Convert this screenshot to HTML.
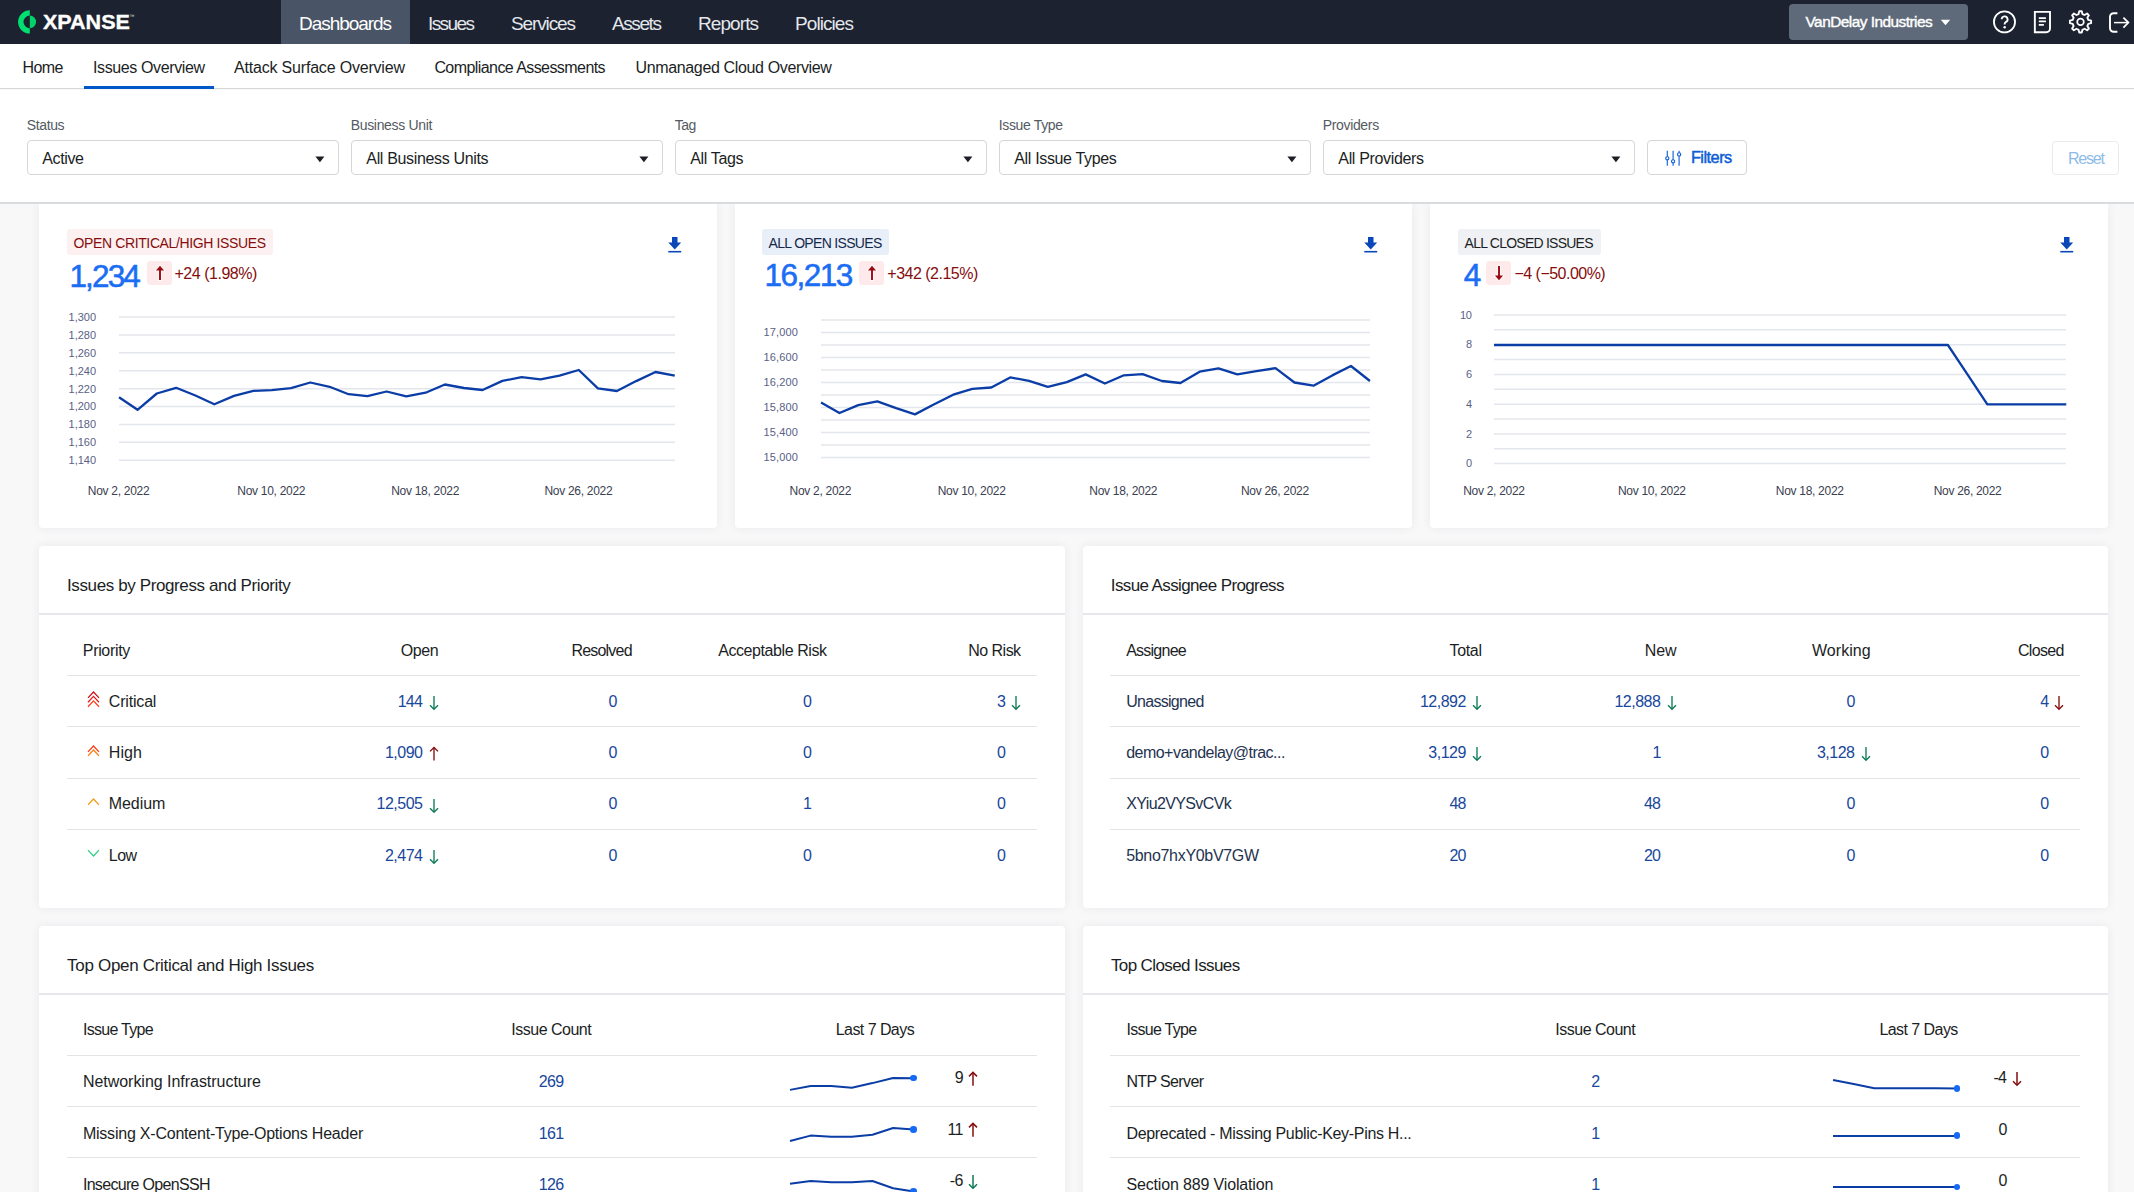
<!DOCTYPE html>
<html><head><meta charset="utf-8"><title>Xpanse - Issues Overview</title>
<style>
html,body{margin:0;padding:0;width:2134px;height:1192px;overflow:hidden;background:#f8f8f9;font-family:"Liberation Sans",sans-serif}
.t{position:absolute;white-space:nowrap}
.r{position:absolute;display:block}
</style></head><body>
<div class="r" style="left:39.00px;top:204.00px;width:677.70px;height:324.30px;background:#ffffff;border-radius:0 0 4px 4px;box-shadow:0 0 10px rgba(40,50,70,0.075);"></div>
<div class="r" style="left:67.00px;top:229.40px;width:206.00px;height:25.60px;background:#fdf0f0;border-radius:3px;"></div>
<div class="t" style="left:73.50px;top:236.25px;font-size:14.0px;line-height:14.0px;letter-spacing:-0.374px;color:#850d0d;">OPEN CRITICAL/HIGH ISSUES</div>
<div class="t" style="left:69.40px;top:260.93px;font-size:31.5px;line-height:31.5px;letter-spacing:-1.832px;color:#1b6ef3;-webkit-text-stroke:0.55px #1b6ef3;">1,234</div>
<div class="r" style="left:147.00px;top:260.80px;width:25.20px;height:24.20px;background:#feeaea;border-radius:3.5px;"></div>
<svg class="r" style="left:151.50px;top:263.00px" width="16" height="20" viewBox="151.50 263.00 16 20"><path d="M158.55 270.40 V280.00 H160.45 V270.40 H163.60 L159.50 265.80 L155.40 270.40 Z" fill="#9a0812" stroke="#ffffff" stroke-width="1.6" stroke-opacity="0.9" paint-order="stroke"/></svg>
<div class="t" style="left:174.40px;top:265.85px;font-size:16px;line-height:16px;letter-spacing:-0.461px;color:#850d0d;">+24 (1.98%)</div>
<svg class="r" style="left:667.90px;top:236.70px" width="14" height="16" viewBox="0 0 14 16"><path d="M4 0 H9.5 V5.6 H13.2 L6.75 12.4 L0.3 5.6 H4 Z" fill="#0a47b8"/><rect x="0.3" y="13.9" width="12.9" height="1.6" fill="#0a47b8"/></svg>
<svg class="r" style="left:118.70px;top:315.30px" width="556.30" height="147.28" viewBox="118.70 315.30 556.30 147.28"><path d="M118.70 317.30 H675.00 M118.70 335.21 H675.00 M118.70 353.12 H675.00 M118.70 371.03 H675.00 M118.70 388.94 H675.00 M118.70 406.85 H675.00 M118.70 424.76 H675.00 M118.70 442.67 H675.00 M118.70 460.58 H675.00" stroke="#e3e6ec" stroke-width="1.5"/></svg>
<div class="t" style="left:68.50px;top:311.89px;font-size:11px;line-height:11px;letter-spacing:0.018px;color:#5a6186;">1,300</div>
<div class="t" style="left:68.50px;top:329.80px;font-size:11px;line-height:11px;letter-spacing:0.018px;color:#5a6186;">1,280</div>
<div class="t" style="left:68.50px;top:347.71px;font-size:11px;line-height:11px;letter-spacing:0.018px;color:#5a6186;">1,260</div>
<div class="t" style="left:68.50px;top:365.62px;font-size:11px;line-height:11px;letter-spacing:0.018px;color:#5a6186;">1,240</div>
<div class="t" style="left:68.50px;top:383.53px;font-size:11px;line-height:11px;letter-spacing:0.018px;color:#5a6186;">1,220</div>
<div class="t" style="left:68.50px;top:401.44px;font-size:11px;line-height:11px;letter-spacing:0.018px;color:#5a6186;">1,200</div>
<div class="t" style="left:68.50px;top:419.35px;font-size:11px;line-height:11px;letter-spacing:0.018px;color:#5a6186;">1,180</div>
<div class="t" style="left:68.50px;top:437.26px;font-size:11px;line-height:11px;letter-spacing:0.018px;color:#5a6186;">1,160</div>
<div class="t" style="left:68.50px;top:455.17px;font-size:11px;line-height:11px;letter-spacing:0.018px;color:#5a6186;">1,140</div>
<svg class="r" style="left:114.70px;top:366.10px" width="563.80" height="47.80" viewBox="114.70 366.10 563.80 47.80"><polyline points="118.70,397.30 137.20,409.90 156.50,393.60 175.80,387.90 195.10,395.60 214.00,404.40 233.70,396.00 253.00,390.90 271.40,390.30 290.70,388.30 310.00,382.60 329.30,386.90 348.30,394.30 367.10,396.30 386.30,391.60 406.00,396.50 425.30,392.80 444.60,384.60 463.60,388.10 482.30,390.10 502.10,381.00 521.30,377.30 540.20,379.40 559.20,375.80 578.50,370.10 597.60,388.40 616.60,391.10 635.90,381.20 655.20,372.10 674.50,375.70" fill="none" stroke="#0b3da6" stroke-width="2.3" stroke-linejoin="round"/></svg>
<div class="t" style="left:87.80px;top:485.44px;font-size:12px;line-height:12px;letter-spacing:-0.291px;color:#3a4050;">Nov 2, 2022</div>
<div class="t" style="left:237.31px;top:485.44px;font-size:12px;line-height:12px;letter-spacing:-0.292px;color:#3a4050;">Nov 10, 2022</div>
<div class="t" style="left:391.21px;top:485.44px;font-size:12px;line-height:12px;letter-spacing:-0.292px;color:#3a4050;">Nov 18, 2022</div>
<div class="t" style="left:544.41px;top:485.44px;font-size:12px;line-height:12px;letter-spacing:-0.292px;color:#3a4050;">Nov 26, 2022</div>
<div class="r" style="left:734.70px;top:204.00px;width:677.60px;height:324.30px;background:#ffffff;border-radius:0 0 4px 4px;box-shadow:0 0 10px rgba(40,50,70,0.075);"></div>
<div class="r" style="left:761.80px;top:229.40px;width:127.20px;height:25.40px;background:#e9eff8;border-radius:3px;"></div>
<div class="t" style="left:768.60px;top:236.25px;font-size:14.0px;line-height:14.0px;letter-spacing:-0.678px;color:#14284b;">ALL OPEN ISSUES</div>
<div class="t" style="left:764.40px;top:260.33px;font-size:31.5px;line-height:31.5px;letter-spacing:-1.469px;color:#1b6ef3;-webkit-text-stroke:0.55px #1b6ef3;">16,213</div>
<div class="r" style="left:859.30px;top:260.80px;width:25.20px;height:24.20px;background:#feeaea;border-radius:3.5px;"></div>
<svg class="r" style="left:863.80px;top:263.00px" width="16" height="20" viewBox="863.80 263.00 16 20"><path d="M870.85 270.40 V280.00 H872.75 V270.40 H875.90 L871.80 265.80 L867.70 270.40 Z" fill="#9a0812" stroke="#ffffff" stroke-width="1.6" stroke-opacity="0.9" paint-order="stroke"/></svg>
<div class="t" style="left:887.30px;top:265.85px;font-size:16px;line-height:16px;letter-spacing:-0.501px;color:#850d0d;">+342 (2.15%)</div>
<svg class="r" style="left:1364.40px;top:236.60px" width="14" height="16" viewBox="0 0 14 16"><path d="M4 0 H9.5 V5.6 H13.2 L6.75 12.4 L0.3 5.6 H4 Z" fill="#0a47b8"/><rect x="0.3" y="13.9" width="12.9" height="1.6" fill="#0a47b8"/></svg>
<svg class="r" style="left:820.50px;top:317.70px" width="549.50" height="141.50" viewBox="820.50 317.70 549.50 141.50"><path d="M820.50 319.70 H1370.00 M820.50 332.20 H1370.00 M820.50 344.70 H1370.00 M820.50 357.20 H1370.00 M820.50 369.70 H1370.00 M820.50 382.20 H1370.00 M820.50 394.70 H1370.00 M820.50 407.20 H1370.00 M820.50 419.70 H1370.00 M820.50 432.20 H1370.00 M820.50 444.70 H1370.00 M820.50 457.20 H1370.00" stroke="#e3e6ec" stroke-width="1.5"/></svg>
<div class="t" style="left:763.40px;top:326.79px;font-size:11px;line-height:11px;letter-spacing:0.151px;color:#5a6186;">17,000</div>
<div class="t" style="left:763.40px;top:351.79px;font-size:11px;line-height:11px;letter-spacing:0.151px;color:#5a6186;">16,600</div>
<div class="t" style="left:763.40px;top:376.79px;font-size:11px;line-height:11px;letter-spacing:0.151px;color:#5a6186;">16,200</div>
<div class="t" style="left:763.40px;top:401.79px;font-size:11px;line-height:11px;letter-spacing:0.151px;color:#5a6186;">15,800</div>
<div class="t" style="left:763.40px;top:426.79px;font-size:11px;line-height:11px;letter-spacing:0.151px;color:#5a6186;">15,400</div>
<div class="t" style="left:763.40px;top:451.79px;font-size:11px;line-height:11px;letter-spacing:0.151px;color:#5a6186;">15,000</div>
<svg class="r" style="left:816.50px;top:362.00px" width="557.00" height="56.40" viewBox="816.50 362.00 557.00 56.40"><polyline points="820.50,402.60 838.90,413.00 857.70,405.10 876.80,401.40 895.60,408.20 914.40,414.40 933.70,404.30 952.70,394.70 971.80,388.90 990.80,387.50 1009.70,377.40 1028.50,380.80 1047.30,386.80 1066.30,382.10 1085.20,374.40 1104.40,383.50 1123.40,375.30 1142.10,374.10 1161.40,381.00 1179.90,383.00 1199.20,371.70 1218.00,368.40 1236.90,374.30 1255.90,371.10 1275.00,368.20 1294.00,382.50 1313.00,385.70 1331.80,375.40 1350.50,366.00 1369.50,381.00" fill="none" stroke="#0b3da6" stroke-width="2.3" stroke-linejoin="round"/></svg>
<div class="t" style="left:789.60px;top:485.44px;font-size:12px;line-height:12px;letter-spacing:-0.291px;color:#3a4050;">Nov 2, 2022</div>
<div class="t" style="left:937.71px;top:485.44px;font-size:12px;line-height:12px;letter-spacing:-0.292px;color:#3a4050;">Nov 10, 2022</div>
<div class="t" style="left:1089.31px;top:485.44px;font-size:12px;line-height:12px;letter-spacing:-0.292px;color:#3a4050;">Nov 18, 2022</div>
<div class="t" style="left:1240.91px;top:485.44px;font-size:12px;line-height:12px;letter-spacing:-0.292px;color:#3a4050;">Nov 26, 2022</div>
<div class="r" style="left:1430.30px;top:204.00px;width:677.50px;height:324.30px;background:#ffffff;border-radius:0 0 4px 4px;box-shadow:0 0 10px rgba(40,50,70,0.075);"></div>
<div class="r" style="left:1457.80px;top:229.30px;width:142.80px;height:25.70px;background:#eff1f4;border-radius:3px;"></div>
<div class="t" style="left:1464.60px;top:236.25px;font-size:14.0px;line-height:14.0px;letter-spacing:-0.762px;color:#1b1e24;">ALL CLOSED ISSUES</div>
<div class="t" style="left:1463.80px;top:260.23px;font-size:31.5px;line-height:31.5px;letter-spacing:0.000px;color:#1b6ef3;-webkit-text-stroke:0.55px #1b6ef3;">4</div>
<div class="r" style="left:1486.20px;top:260.60px;width:25.20px;height:24.40px;background:#feeaea;border-radius:3.5px;"></div>
<svg class="r" style="left:1491.00px;top:263.00px" width="16" height="20" viewBox="1491.00 263.00 16 20"><path d="M1498.05 266.00 V275.60 H1494.90 L1499.00 280.20 L1503.10 275.60 H1499.95 V266.00 Z" fill="#9a0812" stroke="#ffffff" stroke-width="1.6" stroke-opacity="0.9" paint-order="stroke"/></svg>
<div class="t" style="left:1514.50px;top:265.85px;font-size:16px;line-height:16px;letter-spacing:-0.523px;color:#850d0d;">−4 (−50.00%)</div>
<svg class="r" style="left:2060.20px;top:236.70px" width="14" height="16" viewBox="0 0 14 16"><path d="M4 0 H9.5 V5.6 H13.2 L6.75 12.4 L0.3 5.6 H4 Z" fill="#0a47b8"/><rect x="0.3" y="13.9" width="12.9" height="1.6" fill="#0a47b8"/></svg>
<svg class="r" style="left:1494.10px;top:313.10px" width="572.30" height="152.60" viewBox="1494.10 313.10 572.30 152.60"><path d="M1494.10 315.10 H2066.40 M1494.10 329.96 H2066.40 M1494.10 344.82 H2066.40 M1494.10 359.68 H2066.40 M1494.10 374.54 H2066.40 M1494.10 389.40 H2066.40 M1494.10 404.26 H2066.40 M1494.10 419.12 H2066.40 M1494.10 433.98 H2066.40 M1494.10 448.84 H2066.40 M1494.10 463.70 H2066.40" stroke="#e3e6ec" stroke-width="1.5"/></svg>
<div class="t" style="left:1460.03px;top:309.69px;font-size:11px;line-height:11px;letter-spacing:-0.367px;color:#5a6186;">10</div>
<div class="t" style="left:1465.97px;top:339.41px;font-size:11px;line-height:11px;letter-spacing:0.000px;color:#5a6186;">8</div>
<div class="t" style="left:1465.97px;top:369.13px;font-size:11px;line-height:11px;letter-spacing:0.000px;color:#5a6186;">6</div>
<div class="t" style="left:1465.97px;top:398.85px;font-size:11px;line-height:11px;letter-spacing:0.000px;color:#5a6186;">4</div>
<div class="t" style="left:1465.97px;top:428.57px;font-size:11px;line-height:11px;letter-spacing:0.000px;color:#5a6186;">2</div>
<div class="t" style="left:1465.97px;top:458.29px;font-size:11px;line-height:11px;letter-spacing:0.000px;color:#5a6186;">0</div>
<svg class="r" style="left:1490.10px;top:340.82px" width="580.30" height="67.44" viewBox="1490.10 340.82 580.30 67.44"><polyline points="1494.10,344.82 1513.83,344.82 1533.57,344.82 1553.30,344.82 1573.04,344.82 1592.77,344.82 1612.51,344.82 1632.24,344.82 1651.98,344.82 1671.71,344.82 1691.44,344.82 1711.18,344.82 1730.91,344.82 1750.65,344.82 1770.38,344.82 1790.12,344.82 1809.85,344.82 1829.59,344.82 1849.32,344.82 1869.06,344.82 1888.79,344.82 1908.52,344.82 1928.26,344.82 1947.99,344.82 1967.73,374.54 1987.46,404.26 2007.20,404.26 2026.93,404.26 2046.67,404.26 2066.40,404.26" fill="none" stroke="#0b3da6" stroke-width="2.3" stroke-linejoin="round"/></svg>
<div class="t" style="left:1463.20px;top:485.44px;font-size:12px;line-height:12px;letter-spacing:-0.291px;color:#3a4050;">Nov 2, 2022</div>
<div class="t" style="left:1617.89px;top:485.44px;font-size:12px;line-height:12px;letter-spacing:-0.292px;color:#3a4050;">Nov 10, 2022</div>
<div class="t" style="left:1775.77px;top:485.44px;font-size:12px;line-height:12px;letter-spacing:-0.292px;color:#3a4050;">Nov 18, 2022</div>
<div class="t" style="left:1933.64px;top:485.44px;font-size:12px;line-height:12px;letter-spacing:-0.292px;color:#3a4050;">Nov 26, 2022</div>
<div class="r" style="left:39.00px;top:546.30px;width:1025.50px;height:361.30px;background:#ffffff;border-radius:4px;box-shadow:0 0 10px rgba(40,50,70,0.075);"></div>
<div class="r" style="left:1082.50px;top:546.30px;width:1025.50px;height:361.30px;background:#ffffff;border-radius:4px;box-shadow:0 0 10px rgba(40,50,70,0.075);"></div>
<div class="t" style="left:67.00px;top:576.91px;font-size:17px;line-height:17px;letter-spacing:-0.382px;color:#1b1e24;">Issues by Progress and Priority</div>
<div class="t" style="left:1110.80px;top:576.91px;font-size:17px;line-height:17px;letter-spacing:-0.614px;color:#1b1e24;">Issue Assignee Progress</div>
<div class="r" style="left:39.00px;top:613.00px;width:1025.50px;height:2.00px;background:#e6e7ea;"></div>
<div class="r" style="left:1082.50px;top:613.00px;width:1025.50px;height:2.00px;background:#e6e7ea;"></div>
<div class="r" style="left:67.00px;top:675.00px;width:969.50px;height:1.00px;background:#e3e4e7;"></div>
<div class="r" style="left:1110.30px;top:675.00px;width:970.00px;height:1.00px;background:#e3e4e7;"></div>
<div class="r" style="left:67.00px;top:726.00px;width:969.50px;height:1.00px;background:#e3e4e7;"></div>
<div class="r" style="left:1110.30px;top:726.00px;width:970.00px;height:1.00px;background:#e3e4e7;"></div>
<div class="r" style="left:67.00px;top:778.00px;width:969.50px;height:1.00px;background:#e3e4e7;"></div>
<div class="r" style="left:1110.30px;top:778.00px;width:970.00px;height:1.00px;background:#e3e4e7;"></div>
<div class="r" style="left:67.00px;top:829.00px;width:969.50px;height:1.00px;background:#e3e4e7;"></div>
<div class="r" style="left:1110.30px;top:829.00px;width:970.00px;height:1.00px;background:#e3e4e7;"></div>
<div class="t" style="left:82.80px;top:642.75px;font-size:16px;line-height:16px;letter-spacing:-0.326px;color:#1b1e24;">Priority</div>
<div class="t" style="left:400.80px;top:642.75px;font-size:16px;line-height:16px;letter-spacing:-0.447px;color:#1b1e24;">Open</div>
<div class="t" style="left:571.40px;top:642.75px;font-size:16px;line-height:16px;letter-spacing:-0.786px;color:#1b1e24;">Resolved</div>
<div class="t" style="left:718.20px;top:642.75px;font-size:16px;line-height:16px;letter-spacing:-0.423px;color:#1b1e24;">Acceptable Risk</div>
<div class="t" style="left:968.30px;top:642.75px;font-size:16px;line-height:16px;letter-spacing:-0.535px;color:#1b1e24;">No Risk</div>
<div class="t" style="left:108.80px;top:693.65px;font-size:16px;line-height:16px;letter-spacing:-0.184px;color:#1b1e24;">Critical</div>
<div class="t" style="left:108.80px;top:745.05px;font-size:16px;line-height:16px;letter-spacing:0.031px;color:#1b1e24;">High</div>
<div class="t" style="left:108.80px;top:796.45px;font-size:16px;line-height:16px;letter-spacing:-0.081px;color:#1b1e24;">Medium</div>
<div class="t" style="left:108.80px;top:847.85px;font-size:16px;line-height:16px;letter-spacing:-0.526px;color:#1b1e24;">Low</div>
<svg class="r" style="left:87.00px;top:683.80px" width="13" height="24.90000000000009" viewBox="87.00 683.80 13 24.90000000000009" fill="none" stroke-width="1.25"><path d="M88.00 697.70 L93.50 691.80 L99.00 697.70" stroke="#c8121a"/><path d="M88.00 702.10 L93.50 696.20 L99.00 702.10" stroke="#e41a1a"/><path d="M88.00 706.60 L93.50 700.70 L99.00 706.60" stroke="#ff3c14"/></svg>
<svg class="r" style="left:87.00px;top:737.50px" width="13" height="20.0" viewBox="87.00 737.50 13 20.0" fill="none" stroke-width="1.25"><path d="M88.00 751.40 L93.50 745.50 L99.00 751.40" stroke="#ff3a14"/><path d="M88.00 755.40 L93.50 749.50 L99.00 755.40" stroke="#ff7a14"/></svg>
<svg class="r" style="left:87.00px;top:791.40px" width="13" height="16.0" viewBox="87.00 791.40 13 16.0" fill="none" stroke-width="1.25"><path d="M88.00 805.30 L93.50 799.40 L99.00 805.30" stroke="#f59a12"/></svg>
<svg class="r" style="left:87.00px;top:848.40px" width="13" height="16.0" viewBox="87.00 848.40 13 16.0" fill="none" stroke-width="1.25"><path d="M88.00 850.50 L93.50 856.40 L99.00 850.50" stroke="#2fcf84"/></svg>
<div class="t" style="left:397.64px;top:693.65px;font-size:16px;line-height:16px;letter-spacing:-0.667px;color:#18479c;">144</div><svg class="r" style="left:427.60px;top:695.00px" width="12" height="15.6" viewBox="-6 -1 12 15.6" fill="none" stroke="#0c7a58" stroke-width="1.35"><path d="M0 0 V13.0"/><path d="M-4 9.2 L0 13.2 L4 9.2"/></svg>
<div class="t" style="left:608.55px;top:693.65px;font-size:16px;line-height:16px;letter-spacing:0.000px;color:#18479c;">0</div>
<div class="t" style="left:802.95px;top:693.65px;font-size:16px;line-height:16px;letter-spacing:0.000px;color:#18479c;">0</div>
<div class="t" style="left:997.05px;top:693.65px;font-size:16px;line-height:16px;letter-spacing:0.000px;color:#18479c;">3</div><svg class="r" style="left:1010.10px;top:695.00px" width="12" height="15.6" viewBox="-6 -1 12 15.6" fill="none" stroke="#0c7a58" stroke-width="1.35"><path d="M0 0 V13.0"/><path d="M-4 9.2 L0 13.2 L4 9.2"/></svg>
<div class="t" style="left:384.96px;top:745.05px;font-size:16px;line-height:16px;letter-spacing:-0.500px;color:#18479c;">1,090</div><svg class="r" style="left:427.60px;top:746.40px" width="12" height="15.6" viewBox="-6 -1 12 15.6" fill="none" stroke="#850d0d" stroke-width="1.35"><path d="M0 0.6 V13.6"/><path d="M-4 4.4 L0 0.4 L4 4.4"/></svg>
<div class="t" style="left:608.55px;top:745.05px;font-size:16px;line-height:16px;letter-spacing:0.000px;color:#18479c;">0</div>
<div class="t" style="left:802.95px;top:745.05px;font-size:16px;line-height:16px;letter-spacing:0.000px;color:#18479c;">0</div>
<div class="t" style="left:997.05px;top:745.05px;font-size:16px;line-height:16px;letter-spacing:0.000px;color:#18479c;">0</div>
<div class="t" style="left:376.51px;top:796.45px;font-size:16px;line-height:16px;letter-spacing:-0.489px;color:#18479c;">12,505</div><svg class="r" style="left:427.60px;top:797.80px" width="12" height="15.6" viewBox="-6 -1 12 15.6" fill="none" stroke="#0c7a58" stroke-width="1.35"><path d="M0 0 V13.0"/><path d="M-4 9.2 L0 13.2 L4 9.2"/></svg>
<div class="t" style="left:608.55px;top:796.45px;font-size:16px;line-height:16px;letter-spacing:0.000px;color:#18479c;">0</div>
<div class="t" style="left:802.95px;top:796.45px;font-size:16px;line-height:16px;letter-spacing:0.000px;color:#18479c;">1</div>
<div class="t" style="left:997.05px;top:796.45px;font-size:16px;line-height:16px;letter-spacing:0.000px;color:#18479c;">0</div>
<div class="t" style="left:384.96px;top:847.85px;font-size:16px;line-height:16px;letter-spacing:-0.500px;color:#18479c;">2,474</div><svg class="r" style="left:427.60px;top:849.20px" width="12" height="15.6" viewBox="-6 -1 12 15.6" fill="none" stroke="#0c7a58" stroke-width="1.35"><path d="M0 0 V13.0"/><path d="M-4 9.2 L0 13.2 L4 9.2"/></svg>
<div class="t" style="left:608.55px;top:847.85px;font-size:16px;line-height:16px;letter-spacing:0.000px;color:#18479c;">0</div>
<div class="t" style="left:802.95px;top:847.85px;font-size:16px;line-height:16px;letter-spacing:0.000px;color:#18479c;">0</div>
<div class="t" style="left:997.05px;top:847.85px;font-size:16px;line-height:16px;letter-spacing:0.000px;color:#18479c;">0</div>
<div class="t" style="left:1126.20px;top:642.75px;font-size:16px;line-height:16px;letter-spacing:-0.760px;color:#1b1e24;">Assignee</div>
<div class="t" style="left:1449.50px;top:642.75px;font-size:16px;line-height:16px;letter-spacing:-0.324px;color:#1b1e24;">Total</div>
<div class="t" style="left:1644.70px;top:642.75px;font-size:16px;line-height:16px;letter-spacing:-0.104px;color:#1b1e24;">New</div>
<div class="t" style="left:1812.00px;top:642.75px;font-size:16px;line-height:16px;letter-spacing:0.035px;color:#1b1e24;">Working</div>
<div class="t" style="left:2018.00px;top:642.75px;font-size:16px;line-height:16px;letter-spacing:-0.701px;color:#1b1e24;">Closed</div>
<div class="t" style="left:1126.20px;top:693.65px;font-size:16px;line-height:16px;letter-spacing:-0.711px;color:#243350;">Unassigned</div>
<div class="t" style="left:1126.20px;top:745.05px;font-size:16px;line-height:16px;letter-spacing:-0.523px;color:#243350;">demo+vandelay@trac...</div>
<div class="t" style="left:1126.20px;top:796.45px;font-size:16px;line-height:16px;letter-spacing:-0.622px;color:#243350;">XYiu2VYSvCVk</div>
<div class="t" style="left:1126.20px;top:847.85px;font-size:16px;line-height:16px;letter-spacing:-0.314px;color:#243350;">5bno7hxY0bV7GW</div>
<div class="t" style="left:1419.91px;top:693.65px;font-size:16px;line-height:16px;letter-spacing:-0.489px;color:#18479c;">12,892</div><svg class="r" style="left:1471.00px;top:695.00px" width="12" height="15.6" viewBox="-6 -1 12 15.6" fill="none" stroke="#0c7a58" stroke-width="1.35"><path d="M0 0 V13.0"/><path d="M-4 9.2 L0 13.2 L4 9.2"/></svg>
<div class="t" style="left:1614.41px;top:693.65px;font-size:16px;line-height:16px;letter-spacing:-0.489px;color:#18479c;">12,888</div><svg class="r" style="left:1665.50px;top:695.00px" width="12" height="15.6" viewBox="-6 -1 12 15.6" fill="none" stroke="#0c7a58" stroke-width="1.35"><path d="M0 0 V13.0"/><path d="M-4 9.2 L0 13.2 L4 9.2"/></svg>
<div class="t" style="left:1846.55px;top:693.65px;font-size:16px;line-height:16px;letter-spacing:0.000px;color:#18479c;">0</div>
<div class="t" style="left:2040.25px;top:693.65px;font-size:16px;line-height:16px;letter-spacing:0.000px;color:#18479c;">4</div><svg class="r" style="left:2053.30px;top:695.00px" width="12" height="15.6" viewBox="-6 -1 12 15.6" fill="none" stroke="#850d0d" stroke-width="1.35"><path d="M0 0 V13.0"/><path d="M-4 9.2 L0 13.2 L4 9.2"/></svg>
<div class="t" style="left:1428.36px;top:745.05px;font-size:16px;line-height:16px;letter-spacing:-0.500px;color:#18479c;">3,129</div><svg class="r" style="left:1471.00px;top:746.40px" width="12" height="15.6" viewBox="-6 -1 12 15.6" fill="none" stroke="#0c7a58" stroke-width="1.35"><path d="M0 0 V13.0"/><path d="M-4 9.2 L0 13.2 L4 9.2"/></svg>
<div class="t" style="left:1652.45px;top:745.05px;font-size:16px;line-height:16px;letter-spacing:0.000px;color:#18479c;">1</div>
<div class="t" style="left:1816.96px;top:745.05px;font-size:16px;line-height:16px;letter-spacing:-0.500px;color:#18479c;">3,128</div><svg class="r" style="left:1859.60px;top:746.40px" width="12" height="15.6" viewBox="-6 -1 12 15.6" fill="none" stroke="#0c7a58" stroke-width="1.35"><path d="M0 0 V13.0"/><path d="M-4 9.2 L0 13.2 L4 9.2"/></svg>
<div class="t" style="left:2040.25px;top:745.05px;font-size:16px;line-height:16px;letter-spacing:0.000px;color:#18479c;">0</div>
<div class="t" style="left:1449.49px;top:796.45px;font-size:16px;line-height:16px;letter-spacing:-0.890px;color:#18479c;">48</div>
<div class="t" style="left:1643.99px;top:796.45px;font-size:16px;line-height:16px;letter-spacing:-0.890px;color:#18479c;">48</div>
<div class="t" style="left:1846.55px;top:796.45px;font-size:16px;line-height:16px;letter-spacing:0.000px;color:#18479c;">0</div>
<div class="t" style="left:2040.25px;top:796.45px;font-size:16px;line-height:16px;letter-spacing:0.000px;color:#18479c;">0</div>
<div class="t" style="left:1449.49px;top:847.85px;font-size:16px;line-height:16px;letter-spacing:-0.890px;color:#18479c;">20</div>
<div class="t" style="left:1643.99px;top:847.85px;font-size:16px;line-height:16px;letter-spacing:-0.890px;color:#18479c;">20</div>
<div class="t" style="left:1846.55px;top:847.85px;font-size:16px;line-height:16px;letter-spacing:0.000px;color:#18479c;">0</div>
<div class="t" style="left:2040.25px;top:847.85px;font-size:16px;line-height:16px;letter-spacing:0.000px;color:#18479c;">0</div>
<div class="r" style="left:39.00px;top:926.20px;width:1025.50px;height:323.80px;background:#ffffff;border-radius:4px;box-shadow:0 0 10px rgba(40,50,70,0.075);"></div>
<div class="r" style="left:1082.50px;top:926.20px;width:1025.50px;height:323.80px;background:#ffffff;border-radius:4px;box-shadow:0 0 10px rgba(40,50,70,0.075);"></div>
<div class="t" style="left:67.10px;top:957.11px;font-size:17px;line-height:17px;letter-spacing:-0.310px;color:#1b1e24;">Top Open Critical and High Issues</div>
<div class="t" style="left:1110.90px;top:957.11px;font-size:17px;line-height:17px;letter-spacing:-0.600px;color:#1b1e24;">Top Closed Issues</div>
<div class="r" style="left:39.00px;top:993.00px;width:1025.50px;height:2.00px;background:#e6e7ea;"></div>
<div class="r" style="left:1082.50px;top:993.00px;width:1025.50px;height:2.00px;background:#e6e7ea;"></div>
<div class="r" style="left:67.00px;top:1055.00px;width:969.50px;height:1.00px;background:#e3e4e7;"></div>
<div class="r" style="left:1110.30px;top:1055.00px;width:970.00px;height:1.00px;background:#e3e4e7;"></div>
<div class="r" style="left:67.00px;top:1106.00px;width:969.50px;height:1.00px;background:#e3e4e7;"></div>
<div class="r" style="left:1110.30px;top:1106.00px;width:970.00px;height:1.00px;background:#e3e4e7;"></div>
<div class="r" style="left:67.00px;top:1157.00px;width:969.50px;height:1.00px;background:#e3e4e7;"></div>
<div class="r" style="left:1110.30px;top:1157.00px;width:970.00px;height:1.00px;background:#e3e4e7;"></div>
<div class="t" style="left:82.90px;top:1022.35px;font-size:16px;line-height:16px;letter-spacing:-0.698px;color:#1b1e24;">Issue Type</div>
<div class="t" style="left:511.30px;top:1022.35px;font-size:16px;line-height:16px;letter-spacing:-0.498px;color:#1b1e24;">Issue Count</div>
<div class="t" style="left:835.75px;top:1022.35px;font-size:16px;line-height:16px;letter-spacing:-0.558px;color:#1b1e24;">Last 7 Days</div>
<div class="t" style="left:1126.40px;top:1022.35px;font-size:16px;line-height:16px;letter-spacing:-0.698px;color:#1b1e24;">Issue Type</div>
<div class="t" style="left:1555.30px;top:1022.35px;font-size:16px;line-height:16px;letter-spacing:-0.498px;color:#1b1e24;">Issue Count</div>
<div class="t" style="left:1879.45px;top:1022.35px;font-size:16px;line-height:16px;letter-spacing:-0.558px;color:#1b1e24;">Last 7 Days</div>
<div class="t" style="left:82.90px;top:1074.35px;font-size:16px;line-height:16px;letter-spacing:-0.031px;color:#1b1e24;">Networking Infrastructure</div>
<div class="t" style="left:538.82px;top:1074.35px;font-size:16px;line-height:16px;letter-spacing:-0.667px;color:#18479c;">269</div>
<svg class="r" style="left:785.80px;top:1073.80px" width="131.72" height="19.90" viewBox="785.80 1073.80 131.72 19.90"><polyline points="789.80,1089.70 810.42,1085.80 831.04,1085.80 851.66,1087.50 872.28,1082.90 892.90,1077.80 913.52,1078.10" fill="none" stroke="#0b3da6" stroke-width="2.0" stroke-linejoin="round"/></svg>
<div class="r" style="left:910.22px;top:1074.80px;width:6.6px;height:6.6px;border-radius:50%;background:#1469f5"></div>
<div class="t" style="left:954.85px;top:1070.25px;font-size:16px;line-height:16px;letter-spacing:0.000px;color:#1b1e24;">9</div>
<svg class="r" style="left:967.40px;top:1070.90px" width="12" height="15.7" viewBox="-6 -1 12 15.7" fill="none" stroke="#850d0d" stroke-width="1.5"><path d="M0 0.6 V13.7"/><path d="M-4 4.4 L0 0.4 L4 4.4"/></svg>
<div class="t" style="left:82.90px;top:1125.75px;font-size:16px;line-height:16px;letter-spacing:-0.217px;color:#1b1e24;">Missing X-Content-Type-Options Header</div>
<div class="t" style="left:538.82px;top:1125.75px;font-size:16px;line-height:16px;letter-spacing:-0.667px;color:#18479c;">161</div>
<svg class="r" style="left:785.80px;top:1124.20px" width="131.72" height="21.00" viewBox="785.80 1124.20 131.72 21.00"><polyline points="789.80,1141.20 810.42,1135.80 831.04,1136.90 851.66,1136.90 872.28,1135.00 892.90,1128.20 913.52,1129.70" fill="none" stroke="#0b3da6" stroke-width="2.0" stroke-linejoin="round"/></svg>
<div class="r" style="left:910.22px;top:1126.40px;width:6.6px;height:6.6px;border-radius:50%;background:#1469f5"></div>
<div class="t" style="left:947.52px;top:1121.65px;font-size:16px;line-height:16px;letter-spacing:-0.830px;color:#1b1e24;">11</div>
<svg class="r" style="left:967.40px;top:1122.30px" width="12" height="15.7" viewBox="-6 -1 12 15.7" fill="none" stroke="#850d0d" stroke-width="1.5"><path d="M0 0.6 V13.7"/><path d="M-4 4.4 L0 0.4 L4 4.4"/></svg>
<div class="t" style="left:82.90px;top:1177.15px;font-size:16px;line-height:16px;letter-spacing:-0.683px;color:#1b1e24;">Insecure OpenSSH</div>
<div class="t" style="left:538.82px;top:1177.15px;font-size:16px;line-height:16px;letter-spacing:-0.667px;color:#18479c;">126</div>
<svg class="r" style="left:785.80px;top:1177.20px" width="131.72" height="18.50" viewBox="785.80 1177.20 131.72 18.50"><polyline points="789.80,1183.90 810.42,1181.20 831.04,1182.50 851.66,1182.50 872.28,1181.20 892.90,1188.40 913.52,1191.70" fill="none" stroke="#0b3da6" stroke-width="2.0" stroke-linejoin="round"/></svg>
<div class="r" style="left:910.22px;top:1188.40px;width:6.6px;height:6.6px;border-radius:50%;background:#1469f5"></div>
<div class="t" style="left:949.78px;top:1173.05px;font-size:16px;line-height:16px;letter-spacing:-0.711px;color:#1b1e24;">-6</div>
<svg class="r" style="left:967.40px;top:1173.70px" width="12" height="15.7" viewBox="-6 -1 12 15.7" fill="none" stroke="#0c7a58" stroke-width="1.5"><path d="M0 0 V13.1"/><path d="M-4 9.299999999999999 L0 13.299999999999999 L4 9.299999999999999"/></svg>
<div class="t" style="left:1126.40px;top:1074.35px;font-size:16px;line-height:16px;letter-spacing:-0.631px;color:#1b1e24;">NTP Server</div>
<div class="t" style="left:1591.27px;top:1074.35px;font-size:16px;line-height:16px;letter-spacing:0.000px;color:#18479c;">2</div>
<svg class="r" style="left:1829.30px;top:1076.00px" width="131.72" height="16.40" viewBox="1829.30 1076.00 131.72 16.40"><polyline points="1833.30,1080.00 1853.92,1084.10 1874.54,1088.20 1895.16,1088.20 1915.78,1088.20 1936.40,1088.20 1957.02,1088.40" fill="none" stroke="#0b3da6" stroke-width="2.0" stroke-linejoin="round"/></svg>
<div class="r" style="left:1953.72px;top:1085.10px;width:6.6px;height:6.6px;border-radius:50%;background:#1469f5"></div>
<div class="t" style="left:1993.38px;top:1070.25px;font-size:16px;line-height:16px;letter-spacing:-0.711px;color:#1b1e24;">-4</div>
<svg class="r" style="left:2011.20px;top:1070.90px" width="12" height="15.7" viewBox="-6 -1 12 15.7" fill="none" stroke="#850d0d" stroke-width="1.5"><path d="M0 0 V13.1"/><path d="M-4 9.299999999999999 L0 13.299999999999999 L4 9.299999999999999"/></svg>
<div class="t" style="left:1126.40px;top:1125.75px;font-size:16px;line-height:16px;letter-spacing:-0.312px;color:#1b1e24;">Deprecated - Missing Public-Key-Pins H...</div>
<div class="t" style="left:1591.27px;top:1125.75px;font-size:16px;line-height:16px;letter-spacing:0.000px;color:#18479c;">1</div>
<svg class="r" style="left:1829.30px;top:1131.70px" width="131.72" height="8.00" viewBox="1829.30 1131.70 131.72 8.00"><polyline points="1833.30,1135.70 1853.92,1135.70 1874.54,1135.70 1895.16,1135.70 1915.78,1135.70 1936.40,1135.70 1957.02,1135.70" fill="none" stroke="#0b3da6" stroke-width="2.0" stroke-linejoin="round"/></svg>
<div class="r" style="left:1953.72px;top:1132.40px;width:6.6px;height:6.6px;border-radius:50%;background:#1469f5"></div>
<div class="t" style="left:1998.45px;top:1121.65px;font-size:16px;line-height:16px;letter-spacing:0.000px;color:#1b1e24;">0</div>
<div class="t" style="left:1126.40px;top:1177.15px;font-size:16px;line-height:16px;letter-spacing:-0.152px;color:#1b1e24;">Section 889 Violation</div>
<div class="t" style="left:1591.27px;top:1177.15px;font-size:16px;line-height:16px;letter-spacing:0.000px;color:#18479c;">1</div>
<svg class="r" style="left:1829.30px;top:1182.80px" width="131.72" height="8.00" viewBox="1829.30 1182.80 131.72 8.00"><polyline points="1833.30,1186.80 1853.92,1186.80 1874.54,1186.80 1895.16,1186.80 1915.78,1186.80 1936.40,1186.80 1957.02,1186.80" fill="none" stroke="#0b3da6" stroke-width="2.0" stroke-linejoin="round"/></svg>
<div class="r" style="left:1953.72px;top:1183.50px;width:6.6px;height:6.6px;border-radius:50%;background:#1469f5"></div>
<div class="t" style="left:1998.45px;top:1173.05px;font-size:16px;line-height:16px;letter-spacing:0.000px;color:#1b1e24;">0</div>
<div class="r" style="left:0.00px;top:0.00px;width:2134.00px;height:44.00px;background:#1c2230;"></div>
<div class="r" style="left:281.00px;top:0.00px;width:129.00px;height:44.00px;background:#495566;"></div>
<svg class="r" style="left:16px;top:8px" width="26" height="28" viewBox="0 0 26 28">
<path d="M13.8 2.2 A11.7 11.7 0 0 0 13.8 25.6 L13.8 20.2 A6.3 6.3 0 0 1 13.8 7.6 Z" fill="#00e070"/>
<path d="M13.8 7.6 A6.3 6.3 0 0 1 13.8 20.2 Z" fill="#00d468"/>
</svg>
<div class="t" style="left:43.20px;top:12.66px;font-size:19.3px;line-height:19.3px;letter-spacing:0.000px;color:#ffffff;font-weight:700;transform:scaleX(1.115);transform-origin:0 0;-webkit-text-stroke:0.35px #fff;">XPANSE</div>
<div class="t" style="left:129.50px;top:13.97px;font-size:5px;line-height:5px;letter-spacing:0.000px;color:#dfe3ea;">™</div>
<div class="t" style="left:299.00px;top:13.51px;font-size:19px;line-height:19px;letter-spacing:-1.050px;color:#ffffff;">Dashboards</div>
<div class="t" style="left:428.00px;top:13.51px;font-size:19px;line-height:19px;letter-spacing:-1.583px;color:#e4e7ec;">Issues</div>
<div class="t" style="left:511.00px;top:13.51px;font-size:19px;line-height:19px;letter-spacing:-1.122px;color:#e4e7ec;">Services</div>
<div class="t" style="left:612.00px;top:13.51px;font-size:19px;line-height:19px;letter-spacing:-1.404px;color:#e4e7ec;">Assets</div>
<div class="t" style="left:698.00px;top:13.51px;font-size:19px;line-height:19px;letter-spacing:-0.921px;color:#e4e7ec;">Reports</div>
<div class="t" style="left:795.00px;top:13.51px;font-size:19px;line-height:19px;letter-spacing:-0.924px;color:#e4e7ec;">Policies</div>
<div class="r" style="left:1789.00px;top:4.00px;width:179.00px;height:36.00px;background:#5e6a7a;border-radius:4px;"></div>
<div class="t" style="left:1805.50px;top:14.06px;font-size:15.4px;line-height:15.4px;letter-spacing:-0.521px;color:#ffffff;-webkit-text-stroke:0.4px #fff;">VanDelay Industries</div>
<svg class="r" style="left:1940px;top:19px" width="11" height="7"><path d="M0.8 0.8 L10.2 0.8 L5.5 6.2 Z" fill="#fff"/></svg>
<svg class="r" style="left:1990px;top:7px" width="144" height="30" viewBox="1990 7 144 30" fill="none" stroke="#fff" stroke-width="1.6">
<circle cx="2004.5" cy="21.9" r="10.55" stroke-width="1.8"/>
<path d="M2001.7 19.3 A2.95 2.95 0 1 1 2005.7 22.1 C2004.9 22.5 2004.6 23.0 2004.6 24.4" stroke-width="1.85"/>
<circle cx="2004.65" cy="27.3" r="1.2" fill="#fff" stroke="none"/>
<path d="M2034.85 11.85 H2050 V28.6 A3.65 3.65 0 0 1 2046.35 32.25 H2034.85 Z" stroke-width="1.9"/>
<path d="M2038.8 18.1 H2045.9 M2038.8 21.4 H2045.9 M2038.8 24.85 H2043.9" stroke-width="1.6"/>
<path d="M2117.4 13.2 H2113.6 A3.6 3.6 0 0 0 2110 16.8 V28.2 A3.6 3.6 0 0 0 2113.6 31.8 H2117.4" stroke-width="1.9"/>
<path d="M2114 22.6 H2128.3" stroke-width="1.5"/><path d="M2123.4 17.6 L2128.4 22.6 L2123.4 27.6" stroke-width="1.75"/>
</svg>
<svg class="r" style="left:2060px;top:0px" width="44" height="44" viewBox="2060 0 44 44" fill="none" stroke="#fff" stroke-width="1.85" stroke-linejoin="round"><path d="M2087.89 18.84 L2088.26 19.94 L2091.13 20.64 L2091.13 23.16 L2088.26 23.86 L2087.89 24.96 L2087.37 26.00 L2088.90 28.52 L2087.12 30.30 L2084.60 28.77 L2083.56 29.29 L2082.46 29.66 L2081.76 32.53 L2079.24 32.53 L2078.54 29.66 L2077.44 29.29 L2076.40 28.77 L2073.88 30.30 L2072.10 28.52 L2073.63 26.00 L2073.11 24.96 L2072.74 23.86 L2069.87 23.16 L2069.87 20.64 L2072.74 19.94 L2073.11 18.84 L2073.63 17.80 L2072.10 15.28 L2073.88 13.50 L2076.40 15.03 L2077.44 14.51 L2078.54 14.14 L2079.24 11.27 L2081.76 11.27 L2082.46 14.14 L2083.56 14.51 L2084.60 15.03 L2087.12 13.50 L2088.90 15.28 L2087.37 17.80 Z"/><circle cx="2080.5" cy="21.9" r="3.3" stroke-width="1.7"/></svg>
<div class="r" style="left:0.00px;top:44.00px;width:2134.00px;height:45.00px;background:#ffffff;"></div>
<div class="r" style="left:0.00px;top:88.00px;width:2134.00px;height:1.00px;background:#d6d8da;"></div>
<div class="r" style="left:84.00px;top:85.80px;width:130.00px;height:3.20px;background:#0057c8;"></div>
<div class="t" style="left:22.50px;top:60.05px;font-size:16px;line-height:16px;letter-spacing:-0.560px;color:#1b1e24;">Home</div>
<div class="t" style="left:93.00px;top:60.05px;font-size:16px;line-height:16px;letter-spacing:-0.383px;color:#1b1e24;">Issues Overview</div>
<div class="t" style="left:234.00px;top:60.05px;font-size:16px;line-height:16px;letter-spacing:-0.190px;color:#1b1e24;">Attack Surface Overview</div>
<div class="t" style="left:434.40px;top:60.05px;font-size:16px;line-height:16px;letter-spacing:-0.571px;color:#1b1e24;">Compliance Assessments</div>
<div class="t" style="left:635.50px;top:60.05px;font-size:16px;line-height:16px;letter-spacing:-0.354px;color:#1b1e24;">Unmanaged Cloud Overview</div>
<div class="r" style="left:0.00px;top:89.50px;width:2134.00px;height:112.50px;background:#ffffff;"></div>
<div class="r" style="left:0.00px;top:202.00px;width:2134.00px;height:2.00px;background:#d9dcdf;"></div>
<div class="t" style="left:26.70px;top:118.35px;font-size:14px;line-height:14px;letter-spacing:-0.357px;color:#545a62;">Status</div>
<div class="r" style="left:27.00px;top:139.60px;width:312.30px;height:35.00px;background:#ffffff;border:1px solid #d6d6d6;border-radius:4px;box-sizing:border-box;"></div>
<div class="t" style="left:42.30px;top:151.05px;font-size:16px;line-height:16px;letter-spacing:-0.392px;color:#1b1e24;">Active</div>
<svg class="r" style="left:315.30px;top:155.5px" width="10" height="7"><path d="M0.4 0.6 L9.4 0.6 L4.9 6.2 Z" fill="#1b1e24"/></svg>
<div class="t" style="left:350.70px;top:118.35px;font-size:14px;line-height:14px;letter-spacing:-0.321px;color:#545a62;">Business Unit</div>
<div class="r" style="left:351.00px;top:139.60px;width:312.30px;height:35.00px;background:#ffffff;border:1px solid #d6d6d6;border-radius:4px;box-sizing:border-box;"></div>
<div class="t" style="left:366.30px;top:151.05px;font-size:16px;line-height:16px;letter-spacing:-0.339px;color:#1b1e24;">All Business Units</div>
<svg class="r" style="left:639.30px;top:155.5px" width="10" height="7"><path d="M0.4 0.6 L9.4 0.6 L4.9 6.2 Z" fill="#1b1e24"/></svg>
<div class="t" style="left:674.70px;top:118.35px;font-size:14px;line-height:14px;letter-spacing:-0.508px;color:#545a62;">Tag</div>
<div class="r" style="left:675.00px;top:139.60px;width:312.30px;height:35.00px;background:#ffffff;border:1px solid #d6d6d6;border-radius:4px;box-sizing:border-box;"></div>
<div class="t" style="left:690.30px;top:151.05px;font-size:16px;line-height:16px;letter-spacing:-0.358px;color:#1b1e24;">All Tags</div>
<svg class="r" style="left:963.30px;top:155.5px" width="10" height="7"><path d="M0.4 0.6 L9.4 0.6 L4.9 6.2 Z" fill="#1b1e24"/></svg>
<div class="t" style="left:998.70px;top:118.35px;font-size:14px;line-height:14px;letter-spacing:-0.337px;color:#545a62;">Issue Type</div>
<div class="r" style="left:999.00px;top:139.60px;width:312.30px;height:35.00px;background:#ffffff;border:1px solid #d6d6d6;border-radius:4px;box-sizing:border-box;"></div>
<div class="t" style="left:1014.30px;top:151.05px;font-size:16px;line-height:16px;letter-spacing:-0.345px;color:#1b1e24;">All Issue Types</div>
<svg class="r" style="left:1287.30px;top:155.5px" width="10" height="7"><path d="M0.4 0.6 L9.4 0.6 L4.9 6.2 Z" fill="#1b1e24"/></svg>
<div class="t" style="left:1322.70px;top:118.35px;font-size:14px;line-height:14px;letter-spacing:-0.333px;color:#545a62;">Providers</div>
<div class="r" style="left:1323.00px;top:139.60px;width:312.30px;height:35.00px;background:#ffffff;border:1px solid #d6d6d6;border-radius:4px;box-sizing:border-box;"></div>
<div class="t" style="left:1338.30px;top:151.05px;font-size:16px;line-height:16px;letter-spacing:-0.337px;color:#1b1e24;">All Providers</div>
<svg class="r" style="left:1611.30px;top:155.5px" width="10" height="7"><path d="M0.4 0.6 L9.4 0.6 L4.9 6.2 Z" fill="#1b1e24"/></svg>
<div class="r" style="left:1647.20px;top:139.60px;width:99.90px;height:35.00px;background:#ffffff;border:1px solid #d6d6d6;border-radius:4px;box-sizing:border-box;"></div>
<svg class="r" style="left:1660px;top:148px" width="26" height="20" viewBox="1660 148 26 20" fill="none" stroke="#1463d8" stroke-width="1.15">
<path d="M1667.3 150.8 V165.8 M1673.1 150.8 V165.8 M1679.1 150.8 V165.8"/>
<circle cx="1667.3" cy="158.3" r="1.6" fill="#fff"/><circle cx="1673.1" cy="161.3" r="1.6" fill="#fff"/><circle cx="1679.1" cy="154.4" r="1.6" fill="#fff"/>
</svg>
<div class="t" style="left:1690.90px;top:149.20px;font-size:16.3px;line-height:16.3px;letter-spacing:-0.495px;color:#0b5cd5;-webkit-text-stroke:0.45px #0b5cd5;">Filters</div>
<div class="r" style="left:2052.40px;top:140.60px;width:66.90px;height:34.90px;background:#ffffff;border:1px solid #ebebeb;border-radius:4px;box-sizing:border-box;"></div>
<div class="t" style="left:2068.00px;top:151.25px;font-size:16px;line-height:16px;letter-spacing:-1.199px;color:#8dbbe8;">Reset</div>
</body></html>
